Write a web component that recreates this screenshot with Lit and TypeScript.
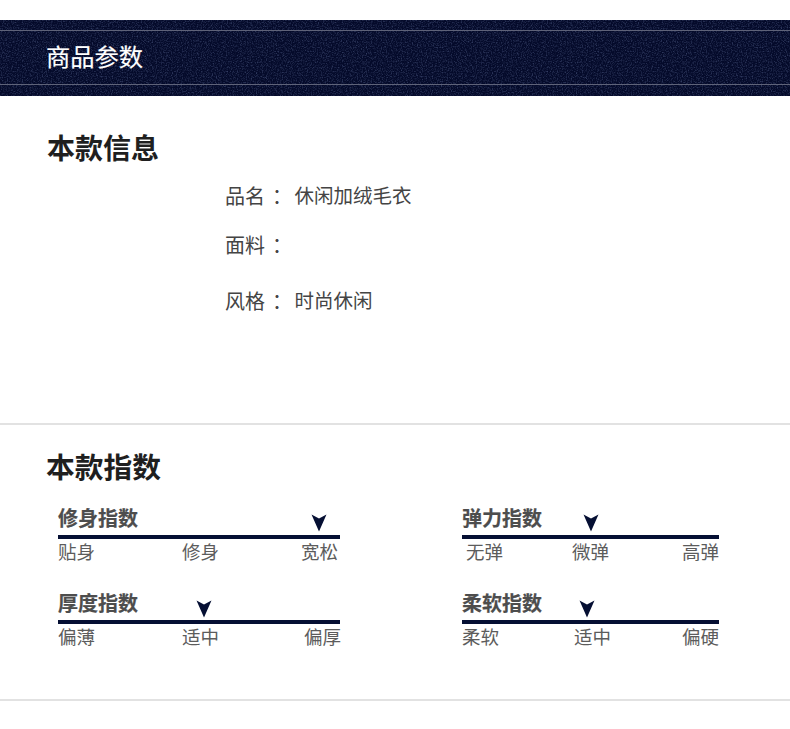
import { LitElement, html, css, svg } from "lit";
import { customElement } from "lit/decorators.js";

interface Gauge { title: string; labels: [string, string, string]; arrow: number; arrowTop: number; pads: [number, number]; mid: number }

const gauges: Gauge[] = [
  { title: "修身指数", labels: ["贴身", "修身", "宽松"], arrow: 253, arrowTop: 12, pads: [0, 2], mid: 124 },
  { title: "弹力指数", labels: ["无弹", "微弹", "高弹"], arrow: 121, arrowTop: 12, pads: [4, 0], mid: 110 },
  { title: "厚度指数", labels: ["偏薄", "适中", "偏厚"], arrow: 138, arrowTop: 13, pads: [0, -1], mid: 124 },
  { title: "柔软指数", labels: ["柔软", "适中", "偏硬"], arrow: 117, arrowTop: 13, pads: [0, 0], mid: 112 },
];

@customElement("app-root")
export class AppRoot extends LitElement {
  static styles = css`
    :host {
      display: block;
      width: 790px;
      height: 729px;
      background: #fff;
      font-family: "Liberation Sans", "Noto Sans CJK SC", sans-serif;
      overflow: hidden;
    }
    .banner {
      position: relative;
      margin-top: 20px;
      height: 76px;
      background: #040a2a;
      overflow: hidden;
    }
    .noise { position: absolute; inset: 0; width: 100%; height: 100%; }
    .rule { position: absolute; left: 0; right: 0; height: 1px; background: #5f6379; }
    .rule.top { top: 10px; }
    .rule.bottom { top: 64px; }
    .banner-title {
      position: relative;
      padding: 21px 0 0 46px;
      font-size: 24.25px;
      line-height: 34px;
      color: #fff;
      -webkit-text-stroke: 0.2px #fff;
    }
    .info { height: 327px; box-sizing: border-box; padding-top: 36px; }
    h2 {
      margin: 0;
      font-size: 28px;
      line-height: 36px;
      font-weight: 700;
      color: #1f1f1f;
    }
    .info h2 { padding-left: 47px; }
    .rows { padding: 14px 0 0 225px; color: #444; font-size: 20px; }
    .row { display: flex; height: 28px; line-height: 28px; }
    .row + .row { margin-top: 21px; }
    .row.third { margin-top: 28px; }
    .key { width: 69.5px; }
    .colon { font-family: "Noto Sans CJK TC", sans-serif; margin-left: 2px; position: relative; top: 1px; }
    .val { font-size: 19.5px; }
    .divider { height: 2px; background: #e2e2e2; }
    .index { height: 274px; box-sizing: border-box; padding-top: 25px; }
    .index h2 { padding-left: 46px; font-size: 28.75px; }
    .grid {
      display: grid;
      grid-template-columns: 282px 257px;
      column-gap: 122px;
      row-gap: 20px;
      padding: 16px 0 0 58px;
    }
    .gauge { position: relative; }
    .gauge-title {
      font-size: 20px;
      line-height: 28px;
      font-weight: 700;
      color: #4d4d4d;
      height: 33px;
      box-sizing: border-box;
      padding-top: 3px;
      -webkit-text-stroke: 0.2px #4d4d4d;
    }
    .bar { height: 4px; background: #050f33; }
    .labels {
      display: flex;
      justify-content: space-between;
      font-size: 18.5px;
      line-height: 28px;
      color: #5c5c5c;
      height: 28px;
      position: relative;
      white-space: nowrap;
    }
    .mid { position: absolute; top: 0; }
    .arrow { position: absolute; width: 16px; height: 18px; }
  `;

  private gauge(g: Gauge) {
    return html`<div class="gauge">
      <div class="gauge-title">${g.title}</div>
      <div class="bar"></div>
      <div class="labels">
        <span style="margin-left:${g.pads[0]}px">${g.labels[0]}</span>
        <span class="mid" style="left:${g.mid}px">${g.labels[1]}</span>
        <span style="margin-right:${g.pads[1]}px">${g.labels[2]}</span>
      </div>
      <svg class="arrow" style="left:${g.arrow}px;top:${g.arrowTop}px" viewBox="0 0 16 18">
        <path d="M0.5 0.5 L8 4.5 L15.5 0.5 L8 17.5 Z" fill="#050f33"></path>
      </svg>
    </div>`;
  }

  render() {
    return html`
      <div class="banner">
        <svg class="noise" aria-hidden="true">
          ${svg`<filter id="n" x="0" y="0" width="100%" height="100%">
            <feTurbulence type="fractalNoise" baseFrequency="0.8" numOctaves="2" seed="4"></feTurbulence>
            <feColorMatrix type="matrix" values="0 0 0 0 0.08  0 0 0 0 0.11  0 0 0 0 0.24  1.4 0 0 0 -0.62"></feColorMatrix>
          </filter>
          <rect width="100%" height="100%" filter="url(#n)"></rect>`}
        </svg>
        <div class="rule top"></div>
        <div class="rule bottom"></div>
        <div class="banner-title">商品参数</div>
      </div>
      <section class="info">
        <h2>本款信息</h2>
        <div class="rows">
          <div class="row"><span class="key">品名<span class="colon">：</span></span><span class="val">休闲加绒毛衣</span></div>
          <div class="row"><span class="key">面料<span class="colon">：</span></span></div>
          <div class="row third"><span class="key">风格<span class="colon">：</span></span><span class="val">时尚休闲</span></div>
        </div>
      </section>
      <div class="divider"></div>
      <section class="index">
        <h2>本款指数</h2>
        <div class="grid">${gauges.map((g) => this.gauge(g))}</div>
      </section>
      <div class="divider"></div>
    `;
  }
}
